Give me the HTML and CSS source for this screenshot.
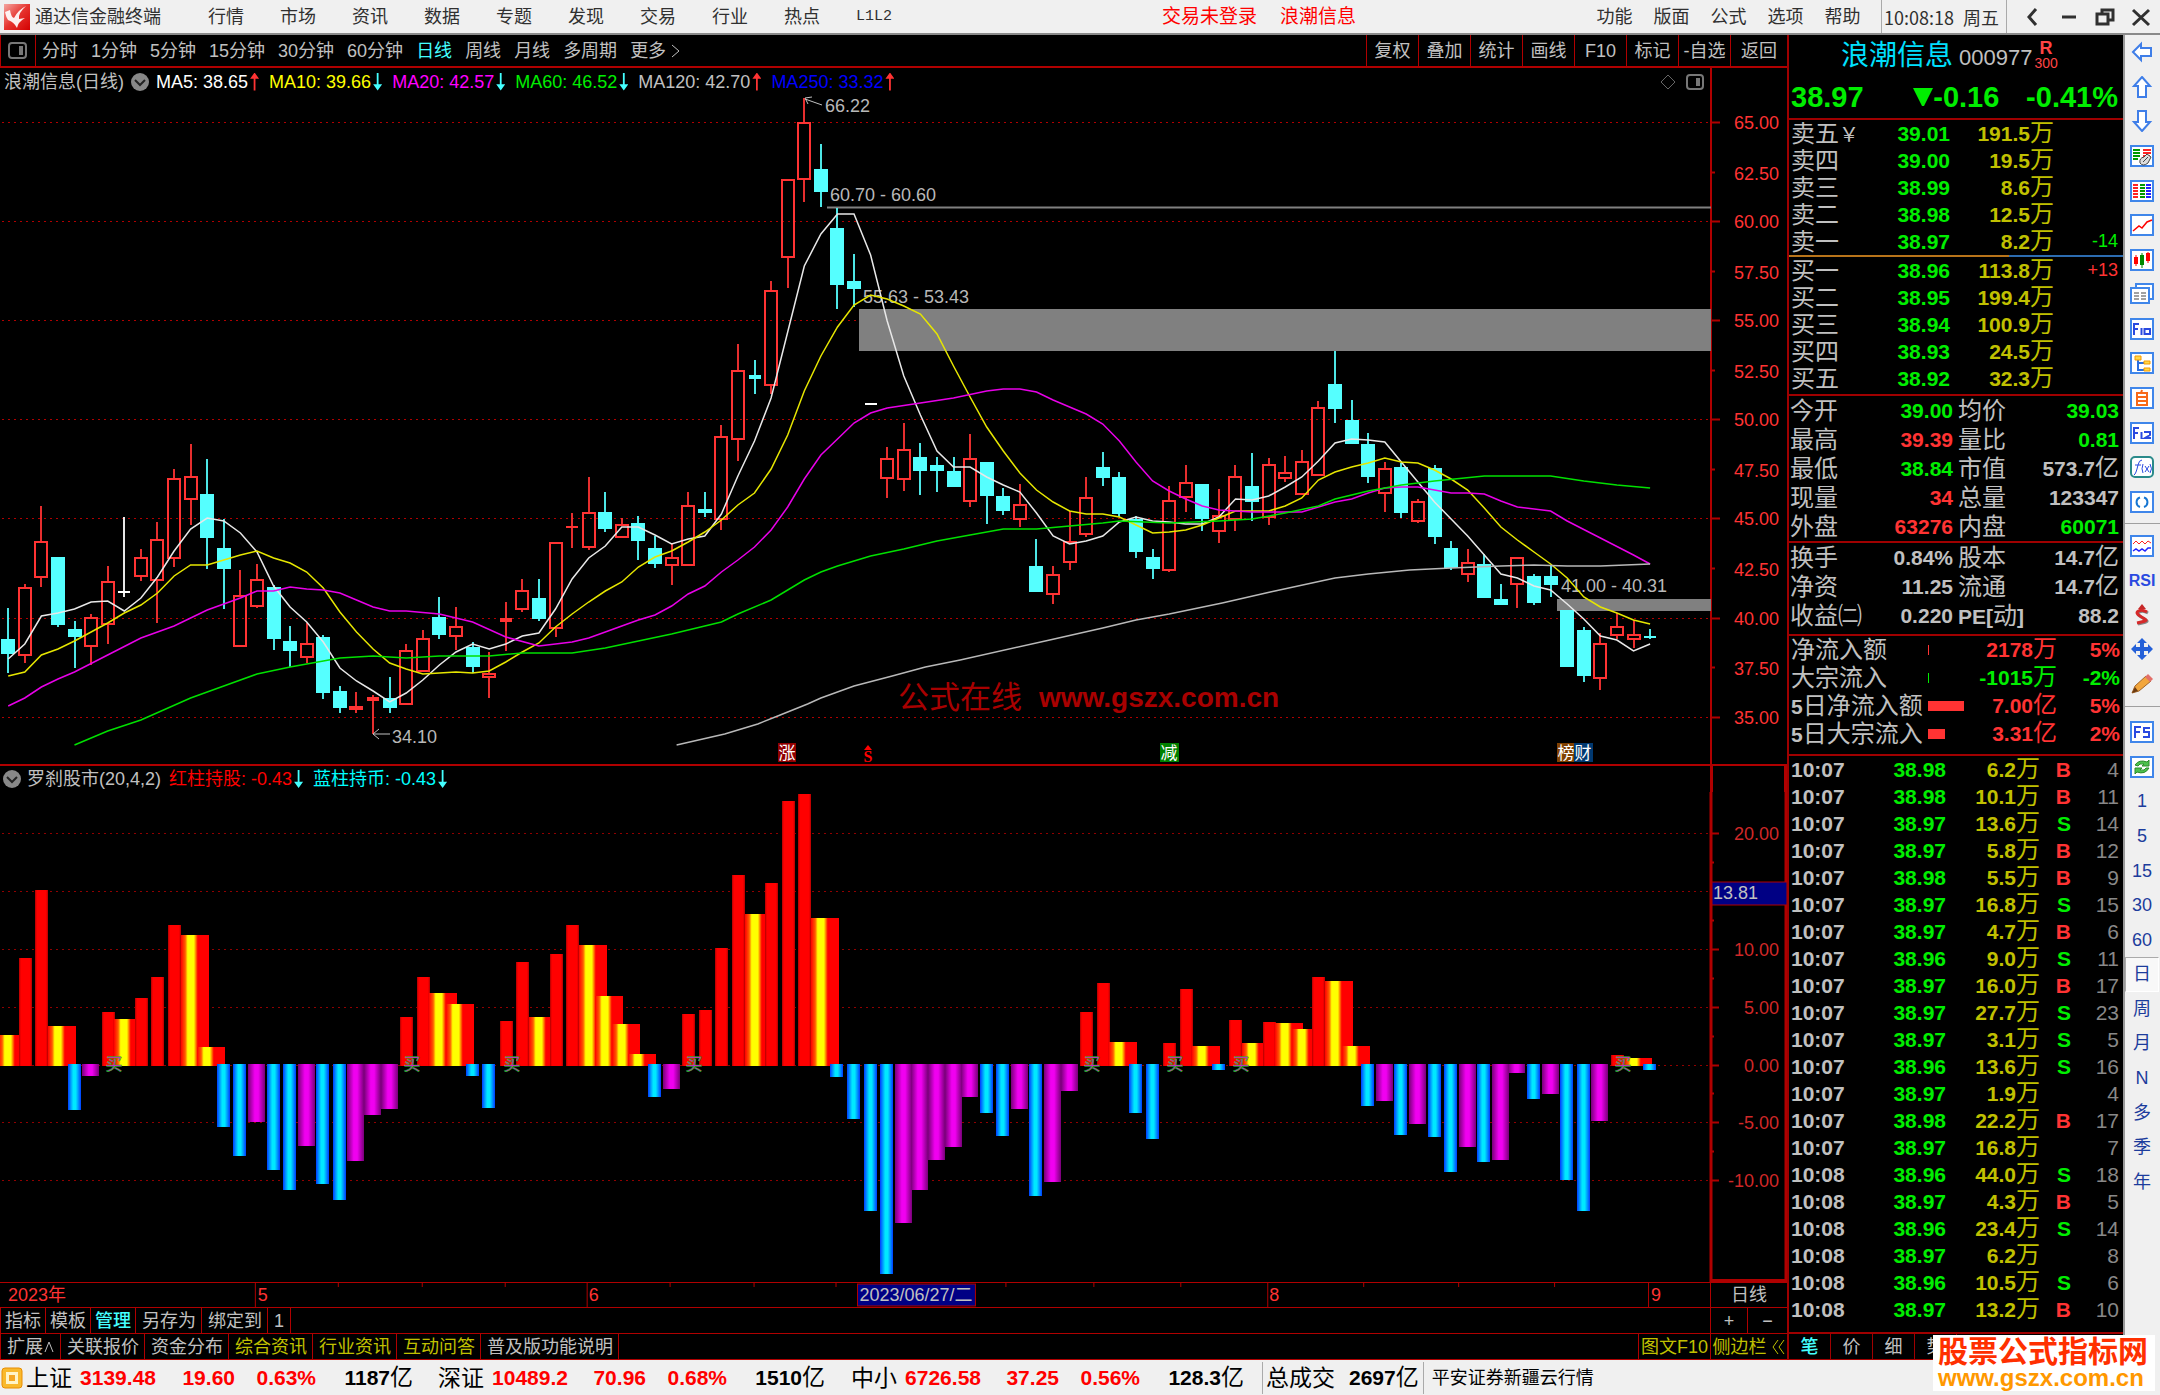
FILE: index.html
```html
<!DOCTYPE html>
<html lang="zh-CN">
<head>
<meta charset="utf-8">
<title>通达信金融终端</title>
<link rel="stylesheet" href="styles.css">
</head>
<body>
<header class="topbar">
  <svg class="logo" viewBox="0 0 26 26" aria-hidden="true">
    <defs><linearGradient id="lg" x1="0" y1="0" x2="1" y2="1"><stop offset="0" stop-color="#f4a6a0"/><stop offset=".5" stop-color="#e6332e"/><stop offset="1" stop-color="#d40000"/></linearGradient></defs>
    <rect width="26" height="26" fill="url(#lg)"/>
    <path d="M1 8 L6 6 Q7 13 10 14 Q14 6 22 2 Q14 9 15 15 L21 14 Q14 18 13 24 Q10 18 4 16 Q2 13 1 8Z" fill="#fff" opacity=".92"/>
  </svg>
  <span class="app-name">通达信金融终端</span>
  <nav class="menu">
    <button>行情</button><button>市场</button><button>资讯</button><button>数据</button><button>专题</button><button>发现</button><button>交易</button><button>行业</button><button>热点</button><button class="mono">L1L2</button>
  </nav>
  <div class="account"><a href="#">交易未登录</a><a href="#">浪潮信息</a></div>
  <nav class="menu menu-right">
    <button>功能</button><button>版面</button><button>公式</button><button>选项</button><button>帮助</button>
  </nav>
  <div class="clock"><span>10:08:18</span><span>周五</span></div>
  <div class="window-buttons">
    <button aria-label="后退"><svg viewBox="0 0 22 22"><path d="M14 3 L7 11 L14 19"/></svg></button>
    <button aria-label="最小化"><svg viewBox="0 0 22 22"><path d="M4 11 H18"/></svg></button>
    <button aria-label="还原"><svg viewBox="0 0 22 22"><path d="M3 8 H14 V18 H3Z M8 8 V4 H19 V14 H14"/></svg></button>
    <button aria-label="关闭"><svg viewBox="0 0 22 22"><path d="M3 4 L19 19 M19 4 L3 19"/></svg></button>
  </div>
</header>

<div class="workspace">
  <main class="charts">
    <div class="periods">
      <button class="panel-toggle" aria-label="侧栏"><svg viewBox="0 0 20 18"><rect x="1" y="1" width="17" height="15" rx="3" fill="none" stroke="#777" stroke-width="2"/><rect x="11" y="4" width="4" height="9" fill="#777"/></svg></button>
      <div class="period-list">
        <button>分时</button><button>1分钟</button><button>5分钟</button><button>15分钟</button><button>30分钟</button><button>60分钟</button><button class="active">日线</button><button>周线</button><button>月线</button><button>多周期</button><button>更多<svg viewBox="0 0 10 18" class="chev"><path d="M1 3 L8 9 L1 15"/></svg></button>
      </div>
      <div class="tools">
        <button>复权</button><button>叠加</button><button>统计</button><button>画线</button><button>F10</button><button>标记</button><button>-自选</button><button>返回</button>
      </div>
    </div>

    <section class="pane">
      <div class="pane-head">
        <div class="legend">
          <span class="name">浪潮信息(日线)</span>
          <svg class="drop" viewBox="0 0 18 18"><circle cx="9" cy="9" r="9" fill="#888"/><path d="M4 7 L9 12 L14 7" fill="none" stroke="#222" stroke-width="2"/></svg>
          <span class="ma c-white">MA5: 38.65<i class="arrow up"></i></span>
          <span class="ma c-yellow">MA10: 39.66<i class="arrow down"></i></span>
          <span class="ma c-magenta">MA20: 42.57<i class="arrow down"></i></span>
          <span class="ma c-green">MA60: 46.52<i class="arrow down"></i></span>
          <span class="ma c-gray">MA120: 42.70<i class="arrow up"></i></span>
          <span class="ma c-blue">MA250: 33.32<i class="arrow up"></i></span>
          <svg class="head-icons" viewBox="0 0 46 18"><path d="M9 2 L16 9 L9 16 L2 9Z" fill="none" stroke="#666"/><rect x="28" y="2" width="16" height="14" rx="3" fill="none" stroke="#777" stroke-width="2"/><rect x="37" y="5" width="4" height="8" fill="#777"/></svg>
        </div>
        <div class="axis-head"></div>
      </div>
      <svg class="plot" id="candles" viewBox="0 95 1787 669">
        <g id="grid-main"></g>
        <text x="898" y="708" class="mark-cn">公式在线</text>
        <text x="1039" y="707" class="mark-url">www.gszx.com.cn</text>
        <rect x="859" y="309" width="852" height="42" fill="#808080"/>
        <rect x="1557" y="599" width="154" height="12" fill="#808080"/>
        <path d="M827 207.500H1711" stroke="#808080" stroke-width="2"/>
        <g id="candle-bodies"></g>
        <g class="note">
          <text x="825" y="112">66.22</text><path d="M822 105 L805 99 M812 97 L805 98 L808 104"/>
          <text x="830" y="201">60.70 - 60.60</text>
          <text x="863" y="303">55.63 - 53.43</text>
          <text x="1561" y="592">41.00 - 40.31</text>
          <text x="392" y="743">34.10</text><path d="M390 734 H373 M379 729 L373 734 L379 739"/>
        </g>
        <g id="averages"></g>
        <g class="flag">
          <rect x="778" y="743" width="18" height="19" fill="#900000"/><text x="787" y="759">涨</text>
          <rect x="1160" y="743" width="19" height="19" fill="#008000"/><text x="1169" y="759">减</text>
          <rect x="1557" y="743" width="17" height="19" fill="#804000"/><text x="1566" y="759">榜</text>
          <rect x="1574" y="743" width="19" height="19" fill="#003870"/><text x="1583" y="759">财</text>
        </g>
        <path d="M864 750 L868 745 L872 750Z" fill="#f00"/><text x="868" y="762" class="s-mark">S</text>
      </svg>
    </section>

    <section class="pane pane-sub">
      <div class="pane-head">
        <div class="legend">
          <svg class="drop" viewBox="0 0 18 18"><circle cx="9" cy="9" r="9" fill="#888"/><path d="M4 7 L9 12 L14 7" fill="none" stroke="#222" stroke-width="2"/></svg>
          <span class="name">罗刹股市(20,4,2)</span>
          <span class="ma c-red">红柱持股: -0.43<i class="arrow down"></i></span>
          <span class="ma c-cyan">蓝柱持币: -0.43<i class="arrow down"></i></span>
        </div>
        <div class="axis-head axis-thick"></div>
      </div>
      <svg class="plot" id="histogram" viewBox="0 792 1787 490">
        <defs>
          <linearGradient id="cy"><stop offset="0" stop-color="#003cff"/><stop offset=".4" stop-color="#00e8ff"/><stop offset=".6" stop-color="#00e8ff"/><stop offset="1" stop-color="#003cff"/></linearGradient>
          <linearGradient id="mg"><stop offset="0" stop-color="#780078"/><stop offset=".4" stop-color="#f000f0"/><stop offset=".6" stop-color="#f000f0"/><stop offset="1" stop-color="#780078"/></linearGradient>
          <linearGradient id="rd"><stop offset="0" stop-color="#b00000"/><stop offset=".15" stop-color="#f00"/><stop offset=".85" stop-color="#f00"/><stop offset="1" stop-color="#b00000"/></linearGradient>
          <linearGradient id="ye"><stop offset="0" stop-color="#f00"/><stop offset=".15" stop-color="#ff5a00"/><stop offset=".24" stop-color="#ff0"/><stop offset=".46" stop-color="#ff0"/><stop offset=".6" stop-color="#f00"/><stop offset="1" stop-color="#f00"/></linearGradient>
        </defs>
        <g id="grid-sub"></g>
        <g id="bars"></g>
      </svg>
    </section>

    <div class="dates">
      <svg class="date-scale" viewBox="0 0 1711 24">
        <path d="M255.500 0V24 M587.500 0V24 M1268.500 0V24 M1649.500 0V24 M338.500 0V4 M422.500 0V4 M505.500 0V4 M670.500 0V4 M754.500 0V4 M836.500 0V4 M1006.500 0V4 M1094.500 0V4 M1181.500 0V4 M1364.500 0V4 M1459.500 0V4 M1555.500 0V4" stroke="#b00000" fill="none"/>
        <rect x="858" y="1" width="118" height="22" fill="#000084" stroke="#b00000"/>
        <g class="date-text"><text x="8" y="18">2023年</text><text x="258" y="18">5</text><text x="589" y="18">6</text><text x="860" y="18" class="picked">2023/06/27/二</text><text x="1270" y="18">8</text><text x="1652" y="18">9</text></g>
      </svg>
      <button class="corner">日线</button>
    </div>
    <div class="strip strip-a">
      <button>指标</button><button>模板</button><button class="active">管理</button><button class="wide">另存为</button><button class="wide">绑定到</button><button class="one">1</button>
      <span class="fill"></span>
      <button class="zoom-in">+</button><button class="zoom-out">−</button>
    </div>
    <div class="strip strip-b">
      <button>扩展<svg class="caret" viewBox="0 0 12 18"><path d="M2 14 L6 4 L10 14"/></svg></button><button>关联报价</button><button>资金分布</button><button class="hot">综合资讯</button><button class="hot">行业资讯</button><button class="hot">互动问答</button><button>普及版功能说明</button>
      <span class="fill"></span>
      <button class="hot f10">图文F10</button><button class="hot side">侧边栏<svg class="caret" viewBox="0 0 16 18"><path d="M8 2 L3 9 L8 16 M14 2 L9 9 L14 16"/></svg></button>
    </div>
  </main>

  <aside class="quote">
    <div class="title"><span class="stock">浪潮信息</span><span class="code">000977</span><span class="tag"><b>R</b><span>300</span></span></div>
    <div class="price"><span>38.97</span><span class="delta"><svg viewBox="0 0 20 20"><path d="M0 1H20L11 19H9Z"/></svg>-0.16</span><span>-0.41%</span></div>

    <table class="depth">
      <tr><th>卖五<small>￥</small></th><td class="g">39.01</td><td class="y">191.5<i>万</i></td><td></td></tr>
      <tr><th>卖四</th><td class="g">39.00</td><td class="y">19.5<i>万</i></td><td></td></tr>
      <tr><th>卖三</th><td class="g">38.99</td><td class="y">8.6<i>万</i></td><td></td></tr>
      <tr><th>卖二</th><td class="g">38.98</td><td class="y">12.5<i>万</i></td><td></td></tr>
      <tr><th>卖一</th><td class="g">38.97</td><td class="y">8.2<i>万</i></td><td class="g thin">-14</td></tr>
    </table>
    <div class="balance"><span></span><span></span></div>
    <table class="depth">
      <tr><th>买一</th><td class="g">38.96</td><td class="y">113.8<i>万</i></td><td class="r thin">+13</td></tr>
      <tr><th>买二</th><td class="g">38.95</td><td class="y">199.4<i>万</i></td><td></td></tr>
      <tr><th>买三</th><td class="g">38.94</td><td class="y">100.9<i>万</i></td><td></td></tr>
      <tr><th>买四</th><td class="g">38.93</td><td class="y">24.5<i>万</i></td><td></td></tr>
      <tr><th>买五</th><td class="g">38.92</td><td class="y">32.3<i>万</i></td><td></td></tr>
    </table>
    <table class="stats">
      <tr><th>今开</th><td class="g">39.00</td><th>均价</th><td class="g">39.03</td></tr>
      <tr><th>最高</th><td class="r">39.39</td><th>量比</th><td class="g">0.81</td></tr>
      <tr><th>最低</th><td class="g">38.84</td><th>市值</th><td>573.7<i>亿</i></td></tr>
      <tr><th>现量</th><td class="r">34</td><th>总量</th><td>123347</td></tr>
      <tr><th>外盘</th><td class="r">63276</td><th>内盘</th><td class="g">60071</td></tr>
    </table>
    <table class="stats ratios">
      <tr><th>换手</th><td>0.84%</td><th>股本</th><td>14.7<i>亿</i></td></tr>
      <tr><th>净资</th><td>11.25</td><th>流通</th><td>14.7<i>亿</i></td></tr>
      <tr><th>收益㈡</th><td>0.220</td><th><b>PE[</b>动<b>]</b></th><td>88.2</td></tr>
    </table>
    <table class="flow">
      <tr class="r"><th>净流入额</th><td><span class="meter" style="width:1px"></span></td><td>2178<i>万</i></td><td>5%</td></tr>
      <tr class="g"><th>大宗流入</th><td><span class="meter" style="width:1px"></span></td><td>-1015<i>万</i></td><td>-2%</td></tr>
      <tr class="r"><th><b>5</b>日净流入额</th><td><span class="meter" style="width:36px"></span></td><td>7.00<i>亿</i></td><td>5%</td></tr>
      <tr class="r"><th><b>5</b>日大宗流入</th><td><span class="meter" style="width:17px"></span></td><td>3.31<i>亿</i></td><td>2%</td></tr>
    </table>
    <div class="trades-box">
      <table class="trades">
        <colgroup><col class="t1"><col class="t2"><col class="t3"><col class="t4"><col></colgroup>
        <tbody id="trades"></tbody>
      </table>
    </div>
    <div class="quote-tabs"><button class="active">笔</button><button>价</button><button>细</button><button>势</button></div>
  </aside>

  <nav class="toolbox">
    <div class="tool-group">
      <button aria-label="左"><svg viewBox="0 0 24 22"><path class="arr" d="M3 11 L11 3 V7 H21 V15 H11 V19Z"/></svg></button>
      <button aria-label="上"><svg viewBox="0 0 24 22"><path class="arr" d="M12 1 L20 10 H16 V21 H8 V10 H4Z"/></svg></button>
      <button aria-label="下"><svg viewBox="0 0 24 22"><path class="arr" d="M12 21 L20 12 H16 V1 H8 V12 H4Z"/></svg></button>
      <button aria-label="自选股"><svg viewBox="0 0 24 22"><rect class="box" x="1" y="1" width="22" height="20"/><path d="M3 5H10M3 8H10M3 11H10M3 14H8" stroke="#090" stroke-width="2"/><path d="M13 5H21M13 8H21M13 11H20" stroke="#f22" stroke-width="2"/><path d="M10 18 Q9 13 14 12 L17 9 L21 12 L18 18 Q13 22 10 18Z" fill="#ddd" stroke="#444"/><path d="M13 17L18 12" stroke="#444"/></svg></button>
      <button aria-label="行情表"><svg viewBox="0 0 24 22"><rect class="box" x="1" y="1" width="22" height="20"/><path d="M3 5H8M3 8H8M3 11H8M3 14H8M3 17H8" stroke="#f22" stroke-width="2"/><path d="M10 5H15M10 8H15M10 11H15M10 14H15M10 17H15" stroke="#090" stroke-width="2"/><path d="M16 5H21M16 8H21M16 11H21M16 14H21M16 17H21" stroke="#22f" stroke-width="2"/></svg></button>
      <button aria-label="分时图"><svg viewBox="0 0 24 22"><rect class="box" x="1" y="1" width="22" height="20"/><path d="M3 17 L9 12 L12 14 L17 8 L22 6" fill="none" stroke="#f00" stroke-width="1.500"/></svg></button>
      <button aria-label="K线图"><svg viewBox="0 0 24 22"><rect class="box" x="1" y="1" width="22" height="20"/><path d="M6 6V17M18 3V14" stroke="#f00"/><path d="M4 8H8V15H4ZM16 4H20V12H16Z" fill="#f00"/><path d="M12 4V19" stroke="#080"/><path d="M10 6H14V16H10Z" fill="#080"/></svg></button>
      <button aria-label="资讯"><svg viewBox="0 0 24 22"><rect class="box" x="6" y="1" width="17" height="15"/><rect class="box" x="1" y="5" width="18" height="15"/><path d="M4 10H9M11 10H16M4 13H9M11 13H16M4 16H9M11 16H16" stroke="#444"/></svg></button>
      <button aria-label="F10"><svg viewBox="0 0 24 22"><rect class="box" x="1" y="1" width="22" height="20"/><path class="pen" d="M4 17V6H9M4 11H8M11.500 10V17M14.500 11H20V16H14.500Z"/></svg></button>
      <button aria-label="板块"><svg viewBox="0 0 24 22"><rect class="box" x="1" y="1" width="22" height="20"/><path d="M8 7V18H14M8 11H14" fill="none" stroke="#2a6fe0" stroke-width="2"/><path d="M5 4H11V8H5ZM14 9H20V12H14ZM14 16H20V19H14Z" fill="#ffd84a" stroke="#f59a00"/></svg></button>
      <button aria-label="自选"><svg viewBox="0 0 24 22"><rect class="box" x="1" y="1" width="22" height="20"/><path d="M7 6H17V18H7ZM7 10H17M7 14H17M12 3L11 6" fill="none" stroke="#f86a1a" stroke-width="2"/></svg></button>
      <button aria-label="F12"><svg viewBox="0 0 24 22"><rect class="box" x="1" y="1" width="22" height="20"/><path class="pen" d="M4 17V6H9M4 11H8M11.500 10V17M14 10H20V13L15 16H21"/></svg></button>
      <button aria-label="公式"><svg viewBox="0 0 24 22"><rect x="1" y="1" width="22" height="20" rx="4" fill="#fff" stroke="#2a8a8a" stroke-width="2"/><path class="thin-pen" d="M4 19 Q6 18 8 9 Q9 4 12 4M5 9H11M13 8Q11 13 13 17M15 10L19 16M19 10L15 16M20 8Q23 13 20 17"/></svg></button>
      <button aria-label="同步"><svg viewBox="0 0 24 22"><rect class="box" x="1" y="1" width="22" height="20"/><path d="M10 16A5 5 0 0 1 10 6.500M14 6.500A5 5 0 0 1 14 16" fill="none" stroke="#1676d2" stroke-width="2"/></svg></button>
    </div>
    <div class="tool-group short">
      <button aria-label="指标"><svg viewBox="0 0 24 22"><rect class="box" x="1" y="1" width="22" height="20"/><path d="M3 9L6 6L9 9L12 6L15 9L18 6L21 8" fill="none" stroke="#f22"/><path d="M3 16L6 14L9 16L12 14L15 16L18 13L21 13" fill="none" stroke="#22f" stroke-width="1.500"/></svg></button>
      <button class="rsi">RSI</button>
      <button aria-label="交易"><svg viewBox="0 0 24 22"><path d="M8 5L12 0L16 5Z" fill="#c62828"/><path d="M17 8Q12 5 8.500 7T10 12T16 16T7 19" fill="none" stroke="#888" stroke-width="3" transform="translate(1 1)"/><path d="M17 8Q12 5 8.500 7T10 12T16 16T7 19" fill="none" stroke="#d62a2a" stroke-width="3"/></svg></button>
      <button aria-label="移动"><svg viewBox="0 0 24 22"><path d="M12 0L17 5H14V9H18V6L23 11L18 16V13H14V17H17L12 22L7 17H10V13H6V16L1 11L6 6V9H10V5H7Z" fill="#2460d8"/></svg></button>
      <button aria-label="画笔"><svg viewBox="0 0 24 22"><path d="M2 20L5 13L16 3L21 8L9 18Z" fill="#f2a63c" stroke="#a0642a"/><path d="M2 20L5 14L8 18Z" fill="#6b3a10"/><path d="M15 4L18 1L23 6L20 9Z" fill="#e2706a"/></svg></button>
    </div>
    <div class="tool-group labels">
      <button aria-label="F5"><svg viewBox="0 0 24 22"><rect class="box" x="1" y="1" width="22" height="20"/><path class="pen" d="M5 17V6H11M5 11H10M20 7H14V11H19V16H13"/></svg></button>
      <button aria-label="刷新"><svg viewBox="0 0 24 22"><rect class="box" x="1" y="1" width="22" height="20"/><path d="M5 9Q9 3 17 6L19 4V10H12L14 8Q9 7 8 10ZM19 12Q15 19 7 16L5 18V12H12L10 14Q15 15 16 12Z" fill="#4cc24c" stroke="#2c8a2c"/></svg></button>
      <button>1</button><button>5</button><button>15</button><button>30</button><button>60</button><button class="pressed">日</button><button>周</button><button>月</button><button>N</button><button>多</button><button>季</button><button>年</button>
    </div>
  </nav>
</div>

<footer class="status">
  <svg class="status-icon" viewBox="0 0 22 22"><rect x="1" y="1" width="20" height="20" rx="3" fill="#f9b92c" stroke="#e88d00"/><rect x="5" y="5" width="12" height="12" fill="#fff4c8"/><rect x="8" y="8" width="6" height="6" fill="#f5a623"/></svg>
  <div class="index i1"><span>上证</span><b>3139.48</b><b>19.60</b><b>0.63%</b><em><b>1187</b>亿</em></div>
  <div class="index i2"><span>深证</span><b>10489.2</b><b>70.96</b><b>0.68%</b><em><b>1510</b>亿</em></div>
  <div class="index i3"><span>中小</span><b>6726.58</b><b>37.25</b><b>0.56%</b><em><b>128.3</b>亿</em></div>
  <div class="total">总成交<em><b>2697</b>亿</em></div>
  <div class="server">平安证券新疆云行情</div>
</footer>
<div class="badge"><strong>股票公式指标网</strong><span>www.gszx.com.cn</span></div>
<script src="chart.js"></script>
</body>
</html>
```
FILE: styles.css
```css
* { box-sizing: border-box; }
body {
  margin: 0;
  min-height: 100vh;
  display: flex;
  flex-direction: column;
  position: relative;
  background: #000;
  color: #c0c0c0;
  font: 18px/24px "Liberation Sans", "Noto Sans CJK SC", sans-serif;
  white-space: nowrap;
}
button {
  border: 0;
  padding: 0;
  background: none;
  color: inherit;
  font: inherit;
  text-align: center;
}
i, em { font-style: normal; }
svg { display: block; flex: none; }

.c-white { color: #fff; }
.c-yellow { color: #ff0; }
.c-magenta { color: #f0f; }
.c-green { color: #0e0; }
.c-gray { color: #c0c0c0; }
.c-blue { color: #00f; }
.c-red { color: #f00; }
.c-cyan { color: #0ff; }

/* top menu */
.topbar {
  display: flex;
  align-items: center;
  height: 35px;
  background: #f0f0f0;
  border-bottom: 2px solid #8a8a8a;
  color: #303030;
}
.logo { width: 26px; height: 26px; margin: 0 5px 0 4px; }
.app-name { width: 155px; }
.menu { display: flex; }
.menu button { width: 72px; }
.menu .mono { font: 15px/24px "Liberation Mono", monospace; }
.account { display: flex; gap: 23px; flex: 1; padding-left: 252px; font-size: 19px; }
.account a { color: #f00; text-decoration: none; }
.menu-right button { width: 57px; }
.clock {
  display: flex;
  gap: 9px;
  width: 126px;
  height: 33px;
  margin-left: 10px;
  padding-left: 2px;
  border: solid #aaa;
  border-width: 0 1px;
  align-items: center;
  font-family: "Noto Sans CJK SC", sans-serif;
}
.window-buttons { display: flex; gap: 14px; padding: 0 8px 0 15px; }
.window-buttons svg { width: 22px; height: 22px; fill: none; stroke: #303030; stroke-width: 3; }

/* layout */
.workspace { display: flex; flex: 1; }
.charts { flex: 1; min-width: 0; display: flex; flex-direction: column; }
.quote { width: 336px; flex: none; display: flex; flex-direction: column; border-left: 2px solid #a00000; }
.toolbox { width: 37px; flex: none; background: #f0f0f0; border-left: 2px solid #999; }

/* period bar */
.periods { display: flex; height: 33px; border: solid #b00000; border-width: 0 0 2px 1px; }
.panel-toggle { width: 35px; border-right: 1px solid #b00000; }
.panel-toggle svg { width: 20px; height: 18px; margin: auto; }
.period-list { display: flex; flex: 1; gap: 13px; padding-left: 6px; }
.period-list button { display: flex; align-items: center; }
.period-list .active { color: #4ff; }
.chev { width: 10px; height: 18px; margin-left: 5px; fill: none; stroke: #c0c0c0; stroke-width: 1; }
.tools { display: grid; grid-template-columns: repeat(7, 52px) 57px; }
.tools button { border-left: 1px solid #b00000; }

/* panes */
.pane-head { display: flex; height: 27px; }
.legend { flex: 1; display: flex; align-items: center; padding-left: 4px; }
.axis-head { width: 77px; border-left: 2px solid #b00000; }
.axis-thick { border-width: 0 3px; border-style: solid; border-color: #b00000; }
.pane-sub { border-top: 2px solid #b00000; }
.pane-sub .pane-head { height: 26px; }
.pane-sub .legend { padding-left: 3px; }
.drop { width: 18px; height: 18px; margin: 0 7px; }
.pane-sub .drop { margin: 0 6px 0 0; }
.ma { display: flex; align-items: center; margin-right: 10px; }
.pane-sub .name { margin-right: 8px; }
.arrow { width: 9px; height: 18px; margin-left: 2px; }
.arrow.up { background: #f33; clip-path: polygon(50% 0, 100% 35%, 60% 35%, 60% 100%, 40% 100%, 40% 35%, 0 35%); }
.arrow.down { background: #4ff; clip-path: polygon(50% 100%, 100% 65%, 60% 65%, 60% 0, 40% 0, 40% 65%, 0 65%); }
.head-icons { width: 46px; height: 18px; margin-left: auto; margin-right: 5px; }
.plot { width: 100%; height: auto; }
.axis-label { fill: #f33; text-anchor: end; }
.sub-label { fill: #d02828; text-anchor: end; }
.cursor-label { fill: #c0c0c0; }
.note text { fill: #b8b8b8; }
.note path { fill: none; stroke: #c0c0c0; }
.flag text { fill: #fff; font-size: 17px; text-anchor: middle; }
.s-mark { fill: #f00; font: bold 16px "Liberation Serif", serif; text-anchor: middle; }
.mark-cn { fill: #a80000; font: 31px "Noto Sans CJK SC", sans-serif; }
.mark-url { fill: #a80000; font: bold 28px "Liberation Sans", sans-serif; }
.buy text { font: 17px "Noto Sans CJK SC", sans-serif; text-anchor: middle; }

/* date axis and strips */
.dates { display: flex; height: 25px; border-top: 1px solid #b00000; }
.date-scale { flex: 1; min-width: 0; height: 24px; }
.date-text { fill: #f33; }
.date-text .picked { fill: #c0c0c0; }
.corner { width: 77px; border-left: 1px solid #b00000; }
.strip { display: flex; border-top: 1px solid #b00000; border-left: 1px solid #b00000; }
.strip-a { height: 26px; }
.strip-b { height: 27px; border-bottom: 1px solid #b00000; }
.strip button { display: flex; align-items: center; justify-content: center; border-right: 1px solid #b00000; padding: 0 4px; }
.strip .wide { padding: 0 5px 0 6px; }
.strip .one { width: 23px; }
.strip-b button { padding: 0 5px 0 6px; }
.strip .fill { flex: 1; border-right: 1px solid #b00000; }
.strip .active { color: #4ff; font-weight: 500; }
.strip .hot { color: #c0c000; }
.strip .f10 { width: 72px; padding: 0; }
.strip .side { width: 76px; padding: 0; border-right: 0; }
.strip .zoom-in { width: 37px; }
.strip .zoom-out { width: 39px; border-right: 0; }
.caret { width: 12px; height: 18px; fill: none; stroke: currentColor; stroke-width: 1; }
.side .caret { width: 16px; margin-left: 3px; }

/* quote panel */
.title { display: flex; align-items: center; height: 41px; padding-left: 52px; }
.stock { color: #00e0ff; font-size: 28px; }
.code { font-size: 22px; margin: 4px 2px 0 6px; }
.tag { display: flex; flex-direction: column; align-items: center; color: #f44; font-size: 14px; line-height: 15px; }
.tag b { font-size: 18px; line-height: 16px; }
.price {
  display: flex;
  justify-content: space-between;
  align-items: center;
  height: 44px;
  padding: 0 5px 0 2px;
  border-bottom: 2px solid #a00000;
  color: #0e0;
  font-weight: bold;
  font-size: 29px;
}
.delta { display: flex; align-items: center; margin-left: 23px; }
.delta svg { width: 20px; height: 20px; fill: #0e0; }
table { width: 100%; border-collapse: collapse; table-layout: fixed; }
th, td { padding: 0; height: 27px; line-height: 27px; }
th { text-align: left; font-weight: normal; font-size: 24px; padding-left: 2px; }
th b { font-size: 21px; line-height: 1px; }
th small { font-size: 20px; line-height: 1px; }
td { text-align: right; font-weight: bold; font-size: 21px; }
td i { font-weight: normal; font-size: 24px; line-height: 1px; }
.g { color: #0e0; }
.r { color: #f33; }
.y { color: #c0c000; }
.depth th:first-child { width: 88px; }
.depth td:nth-child(2) { width: 73px; }
.depth td:nth-child(3) { width: 104px; }
.depth td:nth-child(4) { padding-right: 5px; }
.depth .thin { font-weight: normal; font-size: 18px; }
.balance { display: flex; height: 2px; }
.balance span { background: #b8741a; flex: 220; }
.balance span + span { background: #2c6cb0; flex: 114; }
.stats { border-top: 2px solid #a00000; margin-top: 2px; }
.stats th, .stats td { height: 29px; line-height: 29px; }
.stats td { padding-right: 4px; }
.stats th { padding-left: 1px; overflow: visible; }
.stats th:nth-child(1) { width: 78px; }
.stats td:nth-child(2) { width: 90px; }
.stats th:nth-child(3) { width: 72px; }
.ratios { margin-top: 0; }
.flow { border-top: 2px solid #a00000; margin-top: 4px; }
.flow th, .flow td { height: 28px; line-height: 28px; }
.flow th { width: 139px; }
.flow td:nth-child(2) { width: 38px; }
.flow td:nth-child(3) { width: 91px; }
.flow td:nth-child(4) { padding-right: 3px; }
.flow th { color: #c0c0c0; }
.meter { display: block; height: 10px; background: currentColor; }
.trades-box { flex: 1; border-top: 2px solid #a00000; margin-top: 6px; }
.trades td:first-child { text-align: left; padding-left: 2px; }
.trades td:last-child { padding-right: 4px; font-weight: normal; color: #888; }
.t1 { width: 88px; }
.t2 { width: 69px; }
.t3 { width: 94px; }
.t4 { width: 31px; }
.quote-tabs { display: flex; height: 28px; border: solid #a00000; border-width: 2px 0 1px; }
.quote-tabs button { width: 42px; border-right: 1px solid #a00000; }
.quote-tabs .active { color: #4ff; font-weight: 500; }

/* icon column */
.tool-group { display: grid; grid-auto-rows: 1fr; height: 484px; }
.tool-group button { display: grid; place-items: center; width: 34px; }
.tool-group svg { width: 24px; height: 22px; }
.short { height: 184px; padding: 5px 0; border: solid #a0a0a0; border-width: 1px 0; margin: 4px 0 8px; }
.labels { color: #1c3c9c; }
.labels .pressed { border: 1px solid #aaa; border-right-color: #fff; border-bottom-color: #fff; background: #f8f8f8; }
.rsi { color: #2a4ae0; font-weight: bold; font-size: 16px; }
.box { fill: #fff; stroke: #3f86ea; stroke-width: 2; }
.arr { fill: #fff; stroke: #3f7ee8; stroke-width: 2; }
.pen { fill: none; stroke: #2a4ae0; stroke-width: 2; }
.thin-pen { fill: none; stroke: #2a4ae0; stroke-width: 1; }

/* status bar */
.status {
  display: flex;
  align-items: center;
  height: 36px;
  background: #f0f0f0;
  border-bottom: 1px solid #203040;
  color: #000;
  font-size: 23px;
}
.status b { font-size: 21px; }
.status-icon { width: 22px; height: 22px; margin: 0 3px 0 1px; }
.index { display: grid; align-items: center; }
.index > b { color: #f00; text-align: right; }
.index em { text-align: right; }
.i1 { grid-template-columns: 47px 83px 79px 81px 97px; width: 412px; }
.i2 { grid-template-columns: 47px 83px 78px 81px 98px; width: 413px; }
.i3 { grid-template-columns: 47px 83px 78px 81px 104px; width: 411px; }
.total { display: flex; gap: 14px; height: 32px; align-items: center; padding: 0 4px 0 3px; border: solid #aaa; border-width: 0 1px; }
.server { padding-left: 8px; font-size: 18px; }

.badge {
  position: absolute;
  right: 5px;
  bottom: 5px;
  display: flex;
  flex-direction: column;
  width: 222px;
  height: 56px;
  padding: 0 5px;
  background: #fff;
  color: #ff3000;
}
.badge strong { font-size: 30px; line-height: 34px; }
.badge span { color: #ff9800; font: bold 24px/18px "Liberation Sans", sans-serif; }
```
FILE: chart.js
```js
const NS = 'http://www.w3.org/2000/svg';
const STEP = 16.585;
const xOf = i => 8.2 + STEP * i;

function add(parent, name, attrs, text) {
  const el = document.createElementNS(NS, name);
  for (const k in attrs) el.setAttribute(k, attrs[k]);
  if (text !== undefined) el.textContent = text;
  parent.appendChild(el);
  return el;
}
const byId = id => document.getElementById(id);

// price axis
const main = byId('grid-main');
add(main, 'path', { d: 'M1711 95V764', stroke: '#b00000', 'stroke-width': 2 });
for (let p = 65; p >= 35; p -= 2.5) {
  const y = Math.round(122 + (65 - p) * 19.82) + 0.5;
  const major = p % 5 === 0;
  if (major) add(main, 'path', { d: `M2 ${y}H1710`, stroke: '#b00000', 'stroke-width': 1, 'stroke-dasharray': '2 4' });
  add(main, 'path', { d: `M1711 ${y}h${major ? 9 : 4}`, stroke: '#b00000', 'stroke-width': 2 });
  add(main, 'text', { x: 1779, y: y + (major ? 6 : 7), class: 'axis-label' }, p.toFixed(2));
}

// candles: kind, high, body top, body bottom, low
const candles = [
  ['c',608,639,654,673],['r',584,587,655,663],['r',506,541,577,587],['c',557,557,625,627],['c',621,629,637,668],
  ['r',614,617,646,665],['r',566,581,624,644],['w',517,592,592,597],['r',549,557,576,581],['r',522,539,580,623],
  ['r',469,478,558,567],['r',444,476,499,525],['c',459,494,538,569],['c',519,548,569,609],['r',570,595,646,646],
  ['r',564,579,606,608],['c',585,587,639,650],['c',626,641,651,667],['r',623,643,657,663],['c',635,637,693,699],
  ['c',686,691,708,713],['r',692,706,709,713],['r',695,698,700,734],['c',677,698,708,713],['r',644,650,704,704],
  ['r',630,638,671,671],['c',597,617,635,639],['r',607,626,636,650],['c',642,647,667,673],['r',652,673,677,698],
  ['r',602,619,621,651],['r',579,590,609,612],['c',579,598,619,621],['r',542,542,628,637],['r',513,527,527,548],
  ['r',477,512,547,550],['c',492,512,529,532],['r',518,524,537,538],['c',516,523,541,560],['c',536,548,564,568],
  ['r',544,557,565,585],['r',492,505,565,565],['c',492,509,513,517],['r',425,436,519,530],['r',344,370,439,461],
  ['c',360,376,378,394],['r',281,290,385,394],['r',179,179,257,288],['r',98,122,179,202],['c',144,169,192,207],
  ['c',208,228,285,309],['c',254,281,289,307],['w',404,404,404,404],['r',447,458,478,498],['r',423,449,479,491],
  ['c',443,457,471,495],['c',457,465,471,492],['c',457,471,487,487],['r',434,458,501,507],['c',462,462,496,524],
  ['c',488,496,511,515],['r',484,504,519,527],['c',539,566,592,592],['r',566,574,594,604],['r',511,541,562,570],
  ['r',477,497,534,537],['c',452,467,478,486],['c',472,477,514,517],['c',516,519,552,558],['c',549,557,569,579],
  ['r',486,500,570,572],['r',465,482,497,512],['c',484,484,519,531],['r',489,515,531,543],['r',465,476,519,531],
  ['c',453,486,502,521],['r',458,464,517,525],['r',456,472,478,482],['r',450,461,494,494],['r',401,407,475,475],
  ['c',351,384,409,423],['c',400,420,444,444],['c',433,444,477,483],['r',462,468,493,512],['c',463,467,513,518],
  ['r',499,501,521,523],['c',465,468,537,544],['c',541,548,568,570],['r',549,562,574,582],['c',554,564,598,598],
  ['c',584,599,605,605],['r',557,557,584,608],['c',574,576,603,605],['c',565,576,585,597],['c',610,610,667,667],
  ['c',627,630,676,682],['r',633,643,678,690],['r',613,626,635,639],['r',620,634,639,648],['c',629,637,637,639]
];
const COLORS = { r: '#f33', c: '#5ff', w: '#fff' };
const bodies = byId('candle-bodies');
bodies.setAttribute('shape-rendering', 'crispEdges');
candles.forEach(([kind, hi, top, bottom, lo], i) => {
  const x = Math.round(xOf(i)), color = COLORS[kind];
  const wick = (a, b) => { if (b > a) add(bodies, 'rect', { x: x - 1, y: a, width: 2, height: b - a, fill: color, opacity: 0.9 }); };
  wick(hi, top);
  wick(bottom, lo);
  if (bottom - top < 3) add(bodies, 'rect', { x: x - 6, y: top - 1, width: 12, height: bottom - top + 2, fill: color });
  else if (kind === 'c') add(bodies, 'rect', { x: x - 7, y: top, width: 14, height: bottom - top, fill: color });
  else add(bodies, 'rect', { x: x - 6, y: top + 1, width: 12, height: bottom - top - 1, fill: 'none', stroke: color, 'stroke-width': 1.5 });
});

// moving averages: [candle index, y]
const seq = (start, values) => values.map((y, k) => [start + k, y]);
const averages = [
  ['#e8e8e8', seq(0, [659,644,616,613,609,602,601,611,598,577,551,529,518,521,533,552,586,607,622,642,668,681,691,702,693,680,665,652,644,649,644,636,633,609,579,558,546,527,527,535,544,539,536,514,476,441,398,332,266,234,214,214,255,321,376,415,451,467,467,477,485,492,513,536,544,541,536,522,517,521,522,524,524,517,499,500,496,487,477,461,443,439,440,442,462,482,502,519,536,555,574,578,586,590,604,619,636,640,651,644])],
  ['#e6e600', seq(0, [676,672,655,649,641,632,623,613,605,593,576,565,565,560,555,551,558,563,572,588,612,632,649,663,669,674,673,672,673,671,662,652,643,627,614,602,591,582,567,557,551,542,532,520,505,493,469,435,391,356,327,305,295,299,306,314,334,366,397,427,451,473,490,502,511,514,514,517,525,533,532,530,525,518,511,511,511,506,498,480,472,467,463,458,462,463,470,479,490,508,527,540,552,564,578,597,607,613,620,624])],
  ['#e800e8', [[0,706],[1,698],[2,687],[3,679],[4,672],[6,655],[8,638],[10,626],[12,610],[14,598],[15,591],[16,591],[17,587],[18,589],[19,590],[20,593],[21,600],[22,607],[23,611],[24,611],[26,614],[28,622],[30,637],[32,646],[34,642],[35,638],[36,632],[37,626],[38,620],[39,615],[40,606],[41,594],[42,586],[43,572],[44,560],[45,547],[46,530],[47,507],[48,479],[49,455],[50,439],[51,423],[52,413],[53,408],[55,403],[57,398],[59,391],[60,389],[61,389],[62,392],[63,400],[64,407],[65,414],[66,424],[67,441],[68,462],[69,481],[70,491],[71,499],[72,506],[73,510],[75,512],[78,512],[79,507],[80,502],[81,499],[82,493],[83,488],[84,487],[85,487],[86,490],[87,493],[88,493],[89,494],[90,501],[91,507],[93,511],[94,521],[96,538],[98,555],[99,564]]],
  ['#00e000', [[4,745],[6,731],[8,720],[11,698],[13,686],[15,674],[17,667],[19,661],[20,658],[22,656],[24,658],[26,656],[29,656],[31,653],[34,653],[36,648],[38,641],[40,634],[42,626],[43,622],[44,614],[46,600],[48,580],[49,572],[50,566],[52,556],[54,549],[56,541],[58,535],[60,529],[62,529],[64,526],[66,523],[67,521],[70,523],[73,521],[75,519],[77,513],[79,506],[80,499],[82,491],[84,485],[86,481],[89,476],[93,476],[95,481],[97,485],[99,488]]],
  ['#b8b8b8', [[40.3,745],[43.2,734],[45.2,724],[46.4,716],[48.2,704],[49,698],[51,686],[53.3,676],[55.3,667],[57.4,660],[62.8,640],[66,628],[68,620],[70,614],[73.2,603],[76.1,592],[80,578],[82,574],[84.500,570],[87,568],[90,566],[92,565],[94,566],[96,566],[99,564]]]
];
const lines = byId('averages');
averages.forEach(([color, pts]) => add(lines, 'polyline', {
  points: pts.map(([i, y]) => `${xOf(i).toFixed(1)},${y}`).join(' '),
  fill: 'none', stroke: color, 'stroke-width': 1.5
}));

// indicator axis
const sub = byId('grid-sub');
add(sub, 'path', { d: 'M1711 792V1282M1711 1280.500H1787M1786 792V1282', stroke: '#b00000', 'stroke-width': 3, fill: 'none' });
for (let v = 20; v >= -10; v -= 2.5) {
  const y = Math.round(1064.5 - v * 11.56) + 0.5;
  const major = v % 5 === 0;
  if (major) add(sub, 'path', { d: `M2 ${y}H1710`, stroke: '#900000', 'stroke-width': 1, 'stroke-dasharray': '2 4' });
  add(sub, 'path', { d: `M1712 ${y}h${major ? 7 : 2}`, stroke: '#b00000', 'stroke-width': 2 });
  if (major && v !== 15) add(sub, 'text', { x: 1779, y: y + 6, class: 'sub-label' }, v.toFixed(2));
}
add(sub, 'rect', { x: 1712, y: 882, width: 75, height: 23, fill: '#000084', stroke: '#b00000' });
add(sub, 'text', { x: 1713, y: 899, class: 'cursor-label' }, '13.81');

// histogram: one letter per bar (red, yellow, cyan, magenta), ten bars to a group, and each bar's far end
const kinds = [
  'yrrycmryrr', 'ryyccmccmc', 'cmmmrryycc', 'rryrryyyyc', 'mrrrryrrry',
  'ccccmmmmmc', 'cmcmmrrycc', 'rrycryryyr', 'yycmcmccmc', 'mmcmccmryc'
].join('');
const ends = [1035,958,890,1026,1110,1076,1012,1019,998,977,925,935,1047,1127,1156,1122,1170,1190,1146,1184,1200,1161,1115,1109,1017,977,993,1004,1076,1108,1021,962,1017,954,925,945,996,1024,1054,1097,1089,1014,1010,948,875,914,883,801,794,918,1077,1119,1211,1274,1223,1190,1160,1147,1097,1113,1136,1109,1196,1182,1091,1012,983,1042,1113,1139,1043,989,1046,1070,1020,1043,1022,1023,1029,977,981,1046,1106,1101,1135,1124,1137,1172,1147,1162,1160,1073,1099,1094,1180,1211,1121,1055,1058,1070];
const SHAPES = { r: [-6, 13, 'url(#rd)'], y: [-10, 28, 'url(#ye)'], c: [-7, 13, 'url(#cy)'], m: [-9, 17, 'url(#mg)'] };
const bars = byId('bars');
ends.forEach((end, i) => {
  const [dx, width, fill] = SHAPES[kinds[i]];
  const top = Math.min(end, 1064), bottom = Math.max(end, 1066);
  add(bars, 'rect', { x: Math.round(xOf(i)) + dx, y: top, width, height: bottom - top, fill });
});
const buys = add(bars, 'g', { class: 'buy' });
[6, 24, 30, 41, 65, 70, 74, 97].forEach(i => {
  const x = Math.round(xOf(i)) + 6;
  add(buys, 'text', { x, y: 1070, fill: '#f000f0', stroke: '#00d000', 'stroke-width': 0.5 }, '买');
});

// tick-by-tick trades: minute, price, amount, side, count
const ticks = `07 38.98 6.2 B 4
07 38.98 10.1 B 11
07 38.97 13.6 S 14
07 38.97 5.8 B 12
07 38.98 5.5 B 9
07 38.97 16.8 S 15
07 38.97 4.7 B 6
07 38.96 9.0 S 11
07 38.97 16.0 B 17
07 38.97 27.7 S 23
07 38.97 3.1 S 5
07 38.96 13.6 S 16
07 38.97 1.9 - 4
07 38.98 22.2 B 17
07 38.97 16.8 - 7
08 38.96 44.0 S 18
08 38.97 4.3 B 5
08 38.96 23.4 S 14
08 38.97 6.2 - 8
08 38.96 10.5 S 6
08 38.97 13.2 B 10`;
byId('trades').innerHTML = ticks.split('\n').map(line => {
  const [m, price, amount, side, count] = line.split(' ');
  const mark = side === '-' ? '<td></td>' : `<td class="${side === 'B' ? 'r' : 'g'}">${side}</td>`;
  return `<tr><td>10:${m}</td><td class="g">${price}</td><td class="y">${amount}<i>万</i></td>${mark}<td>${count}</td></tr>`;
}).join('');
```
